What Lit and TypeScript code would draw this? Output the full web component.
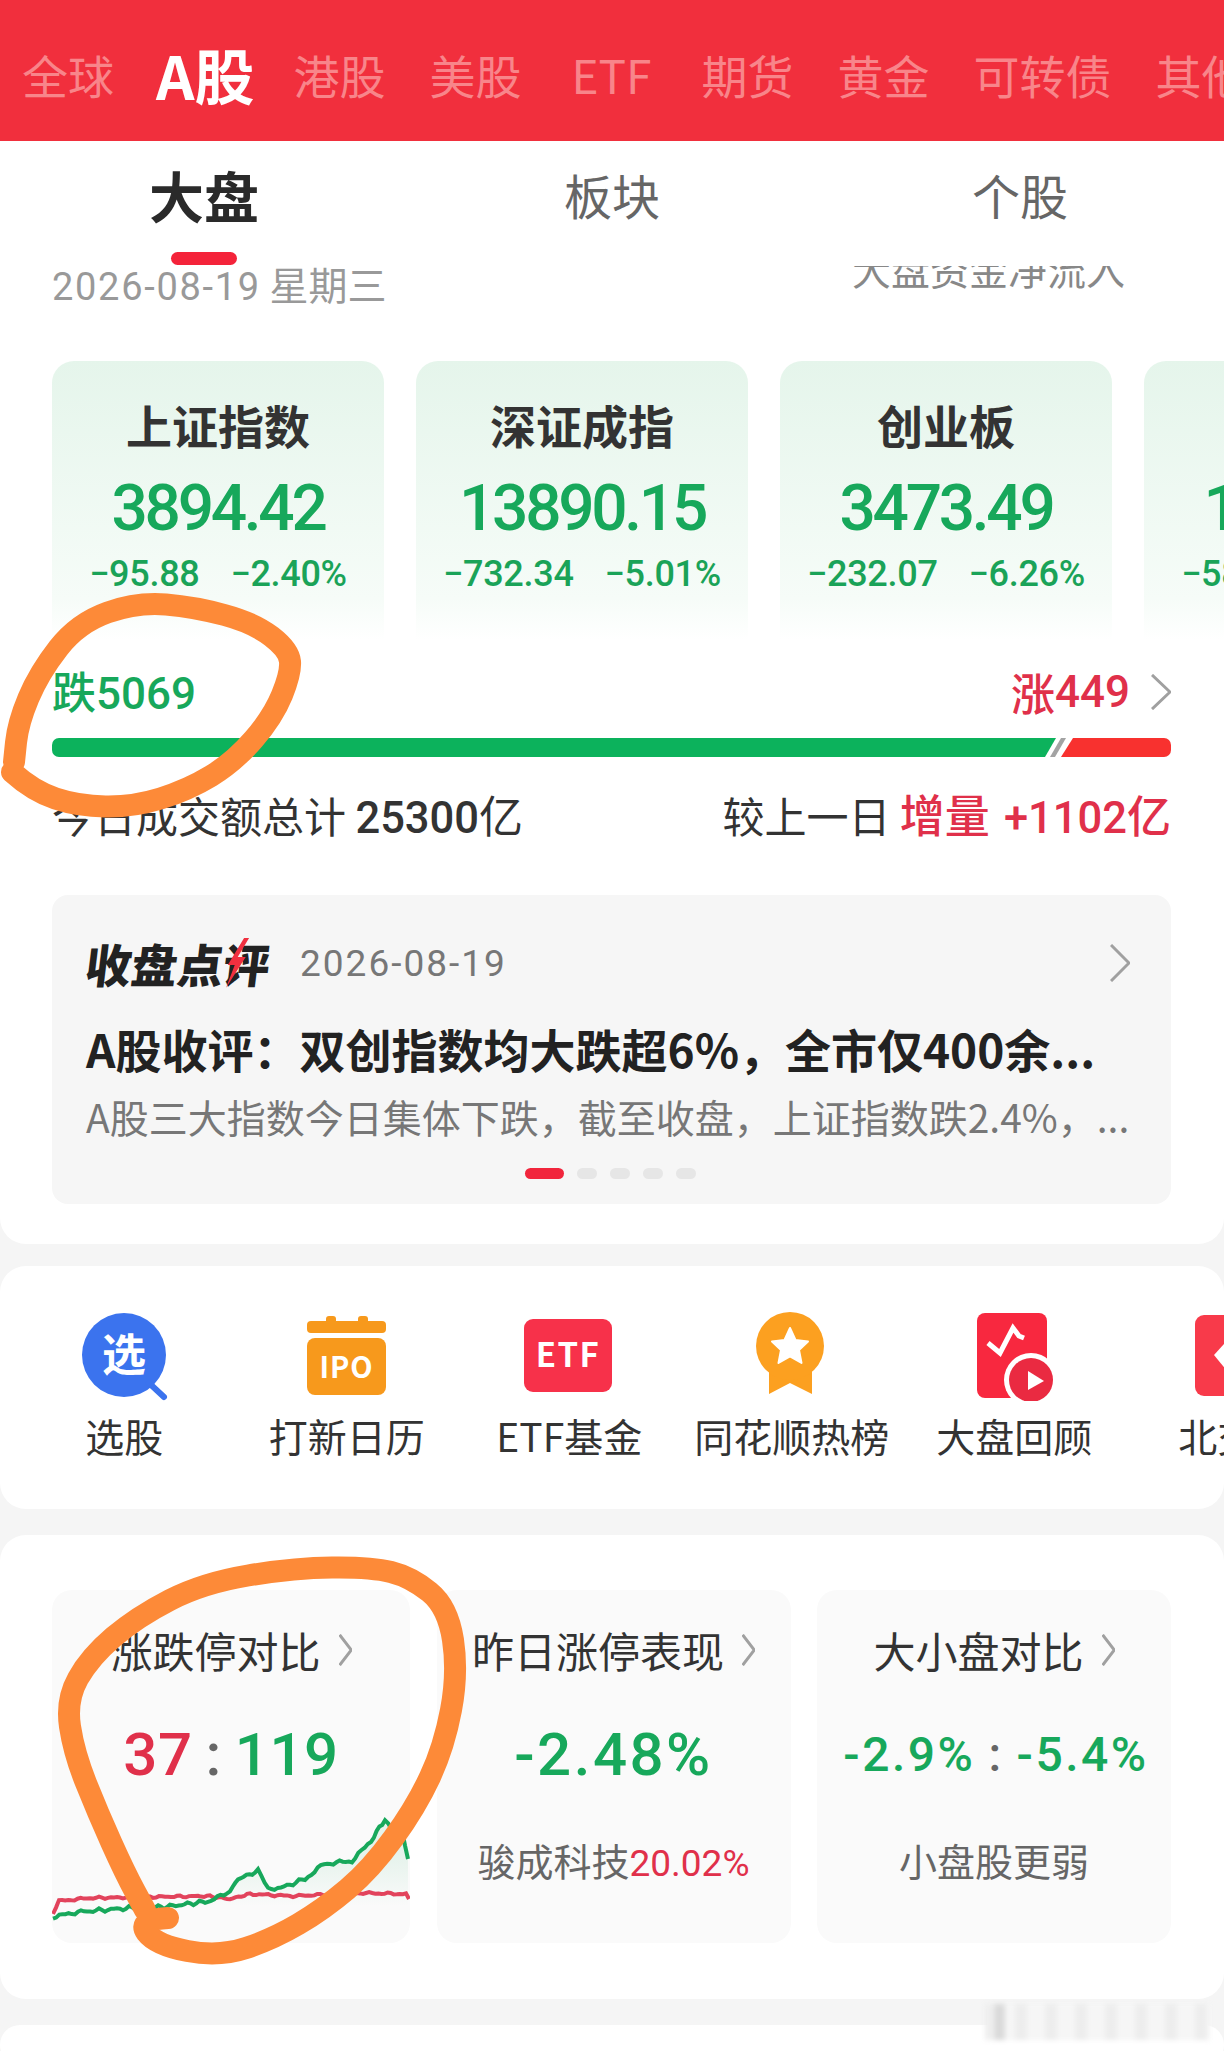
import { css, html, LitElement, svg } from "lit";
import { customElement } from "lit/decorators.js";

type Pt = [number, number];

const MARKETS = ["全球", "A股", "港股", "美股", "ETF", "期货", "黄金", "可转债", "其他"];

const INDEXES = [
  { name: "上证指数", value: "3894.42", diff: "−95.88", pct: "−2.40%" },
  { name: "深证成指", value: "13890.15", diff: "−732.34", pct: "−5.01%" },
  { name: "创业板", value: "3473.49", diff: "−232.07", pct: "−6.26%" },
  { name: "科创50", value: "1283.05", diff: "−58.70", pct: "−4.38%" },
];

const GREEN_LINE: Pt[] = [
  [1, 327], [26, 322], [77, 318], [112, 317], [159, 311], [178, 301], [186, 289], [206, 281],
  [216, 298], [229, 298], [253, 289], [272, 274], [300, 271], [319, 251], [333, 229], [346, 251],
  [350, 241], [356, 269],
];
const RED_LINE: Pt[] = [
  [1, 323], [7, 311], [38, 308], [155, 306], [178, 309], [198, 304], [241, 306], [311, 303],
  [354, 304], [357, 309],
];

const CIRCLE_ONE: Pt[] = [
  [12, 772], [33, 791], [78, 806], [133, 807], [188, 790], [234, 762], [273, 717], [291, 673],
  [289, 650], [254, 623], [195, 607], [137, 602], [78, 623], [39, 673], [18, 723], [14, 762],
];
const CIRCLE_TWO: Pt[] = [
  [168, 1918], [137, 1920], [156, 1945], [219, 1957], [273, 1939], [324, 1909], [371, 1869],
  [416, 1807], [444, 1747], [458, 1673], [448, 1607], [411, 1577], [371, 1567], [293, 1568],
  [203, 1583], [137, 1617], [90, 1657], [66, 1700], [74, 1753], [98, 1813], [125, 1873], [145, 1910],
];

// rounds a list of hand traced points into a path through the midpoints
function smooth(pts: Pt[]) {
  let d = `M${pts[0][0]} ${pts[0][1]}`;
  for (let i = 1; i < pts.length - 1; i++) {
    const mx = (pts[i][0] + pts[i + 1][0]) / 2;
    const my = (pts[i][1] + pts[i + 1][1]) / 2;
    d += ` Q${pts[i][0]} ${pts[i][1]} ${mx} ${my}`;
  }
  const last = pts[pts.length - 1];
  return `${d} L${last[0]} ${last[1]}`;
}

// the intraday lines are noisy, so walk the outline and add a little jitter
function jagged(pts: Pt[], amp: number) {
  const out: string[] = [];
  for (let i = 0; i < pts.length - 1; i++) {
    const [x0, y0] = pts[i];
    const [x1, y1] = pts[i + 1];
    const steps = Math.max(1, Math.round((x1 - x0) / 3));
    for (let s = 0; s < steps; s++) {
      const x = x0 + ((x1 - x0) * s) / steps;
      const y = y0 + ((y1 - y0) * s) / steps;
      const noise = Math.sin(x * 1.7) * amp + Math.sin(x * 0.63) * amp * 0.7;
      out.push(`${x.toFixed(1)},${(y + noise).toFixed(1)}`);
    }
  }
  const end = pts[pts.length - 1];
  out.push(`${end[0]},${end[1]}`);
  return out.join(" ");
}

const chevron = (w: number, h: number) => html`
  <svg class="chevron" width=${w} height=${h} viewBox="0 0 20 38" preserveAspectRatio="none">
    <polyline
      points="1,1 19,19 1,37"
      fill="none"
      stroke="#a0a0a0"
      stroke-width="3"
      vector-effect="non-scaling-stroke"
    />
  </svg>
`;

const ICONS = [
  {
    label: "选股",
    art: svg`
      <circle cx="45" cy="44" r="42" fill="#3b73ee" />
      <line x1="70" y1="72" x2="85" y2="86" stroke="#3b73ee" stroke-width="6" stroke-linecap="round" />
      <text x="45" y="60" text-anchor="middle" font-size="44" font-weight="700" fill="#fff">选</text>
    `,
  },
  {
    label: "打新日历",
    art: svg`
      <rect x="24" y="5" width="10" height="10" rx="3" fill="#f7991c" />
      <rect x="56" y="5" width="10" height="10" rx="3" fill="#f7991c" />
      <rect x="5" y="10" width="79" height="12" rx="4" fill="#f7991c" />
      <rect x="5" y="27" width="79" height="57" rx="8" fill="#f7991c" />
      <text x="44.5" y="67" text-anchor="middle" font-size="29" font-weight="700" letter-spacing="1" fill="#fff" font-family="Liberation Sans">IPO</text>
    `,
  },
  {
    label: "ETF基金",
    art: svg`
      <rect x="0" y="8" width="88" height="73" rx="9" fill="#f7314a" />
      <text x="44" y="56" text-anchor="middle" font-size="33" font-weight="700" letter-spacing="1.5" fill="#fff" font-family="Liberation Sans">ETF</text>
    `,
  },
  {
    label: "同花顺热榜",
    art: svg`
      <polygon points="22,50 65,50 65,83 43,72 22,83" fill="#fca020" />
      <circle cx="43" cy="35" r="34" fill="#fca020" />
      <polygon points="43,17 48.5,29 61,30.5 52,39 54.5,52 43,45.5 31.5,52 34,39 25,30.5 37.5,29" fill="#fff" stroke="#fff" stroke-width="2" stroke-linejoin="round" />
    `,
  },
  {
    label: "大盘回顾",
    art: svg`
      <rect x="8" y="2" width="70" height="85" rx="8" fill="#f8283f" />
      <polyline points="19,32 31,42 44,17 50,25 55,27" fill="none" stroke="#fff" stroke-width="5" />
      <circle cx="62" cy="69" r="27" fill="#fff" />
      <circle cx="62" cy="69" r="22" fill="#ea2a41" />
      <polygon points="59,60 59,79 75,70" fill="#fff" />
    `,
  },
  {
    label: "北交所",
    art: svg`
      <rect x="3" y="4" width="82" height="81" rx="9" fill="#f83a4a" />
      <polygon points="33,32 57,32 68,44 45,72 22,44" fill="#fff" />
    `,
  },
];

@customElement("app-root")
export class AppRoot extends LitElement {
  private renderIndexCard(item: (typeof INDEXES)[number]) {
    return html`
      <div class="index-card">
        <div class="index-name">${item.name}</div>
        <div class="index-value num">${item.value}</div>
        <div class="index-diff num"><span>${item.diff}</span><span>${item.pct}</span></div>
      </div>
    `;
  }

  private renderChart() {
    const green = jagged(GREEN_LINE, 1.2);
    const red = jagged(RED_LINE, 0.7);
    return html`
      <svg class="chart" viewBox="0 0 358 353" width="358" height="353">
        <defs>
          <linearGradient id="chart-fade" x1="0" y1="0" x2="0" y2="1">
            <stop offset="0.3" stop-color="#17a85b" stop-opacity="0.09" />
            <stop offset="0.75" stop-color="#17a85b" stop-opacity="0" />
          </linearGradient>
        </defs>
        <polygon points="${green} 356,345 1,345" fill="url(#chart-fade)" />
        <polyline points=${red} fill="none" stroke="#e2435c" stroke-width="4" />
        <polyline points=${green} fill="none" stroke="#17a85b" stroke-width="4" />
      </svg>
    `;
  }

  render() {
    return html`
      <header class="markets">
        ${MARKETS.map(
          (m) =>
            html`<span class="market ${m === "A股" ? "active" : ""} ${m === "ETF" ? "latin" : ""}"
              >${m}</span
            >`
        )}
      </header>

      <section class="panel first">
        <nav class="subtabs">
          <div class="subtab active"><span>大盘</span><i></i></div>
          <div class="subtab"><span>板块</span></div>
          <div class="subtab"><span>个股</span></div>
        </nav>

        <div class="date-row">
          <span class="date"><span class="num">2026-08-19</span> 星期三</span>
          <span class="flow">大盘资金净流入</span>
        </div>

        <div class="index-row">${INDEXES.map((i) => this.renderIndexCard(i))}</div>

        <div class="breadth">
          <span class="down">跌<span class="num">5069</span></span>
          <span class="up">涨<span class="num">449</span>${chevron(20, 36)}</span>
        </div>
        <svg class="bar" viewBox="0 0 1119 19" width="1119" height="19">
          <polygon points="0,0 1004,0 993,19 0,19" fill="#0cb25c" />
          <polygon points="1009,0 1014,0 1003,19 998,19" fill="#a3a3a3" />
          <polygon points="1021,0 1119,0 1119,19 1009,19" fill="#f8312f" />
        </svg>

        <div class="volume">
          <span>今日成交额总计 <span class="amount"><span class="num">25300</span>亿</span></span>
          <span>较上一日 <em>增量 <span class="amount gain"><span class="num">+1102</span>亿</span></em></span>
        </div>

        <article class="review">
          <div class="review-head">
            <span class="review-title">收盘点评
              <svg class="bolt" viewBox="0 0 22 50" width="22" height="50">
                <polygon points="16,0 3,27 10,27 4,50 20,19 12,19 21,0" fill="#f0303f" />
              </svg>
            </span>
            <span class="review-date num">2026-08-19</span>
            ${chevron(20, 38)}
          </div>
          <div class="review-headline">A股收评：双创指数均大跌超6%，全市仅400余...</div>
          <div class="review-sub">A股三大指数今日集体下跌，截至收盘，上证指数跌2.4%，...</div>
          <div class="dots"><i class="on"></i><i></i><i></i><i></i><i></i></div>
        </article>
      </section>

      <section class="panel shortcuts">
        ${ICONS.map(
          (icon) => html`
            <div class="shortcut">
              <svg viewBox="0 0 90 90" width="90" height="90">${icon.art}</svg>
              <span>${icon.label}</span>
            </div>
          `
        )}
      </section>

      <section class="panel stats">
        <div class="stat">
          ${this.renderChart()}
          <div class="stat-title">涨跌停对比${chevron(13, 32)}</div>
          <div class="stat-value tight num"><b class="red">37</b><b class="colon">:</b><b>119</b></div>
        </div>
        <div class="stat">
          <div class="stat-title">昨日涨停表现${chevron(13, 32)}</div>
          <div class="stat-value num"><b>-2.48%</b></div>
          <div class="stat-note">骏成科技<span class="num red">20.02%</span></div>
        </div>
        <div class="stat">
          <div class="stat-title">大小盘对比${chevron(13, 32)}</div>
          <div class="stat-value small num"><b>-2.9%</b><b class="colon">:</b><b>-5.4%</b></div>
          <div class="stat-note">小盘股更弱</div>
        </div>
      </section>

      <section class="panel last"></section>
      <div class="watermark"></div>

      <svg class="scribble" viewBox="0 0 1224 2051" width="1224" height="2051">
        <path d=${smooth(CIRCLE_ONE)} />
        <path d=${smooth(CIRCLE_TWO)} />
      </svg>
    `;
  }

  static styles = css`
    :host {
      display: block;
      position: relative;
      width: 1224px;
      height: 2051px;
      overflow: hidden;
      background: #f5f5f5;
      color: #333;
      font-family: "Noto Sans CJK SC", sans-serif;
    }

    .num {
      font-family: Roboto, "Noto Sans CJK SC", sans-serif;
    }

    .red {
      color: #e0304a;
    }

    .markets {
      display: flex;
      align-items: center;
      gap: 44px;
      height: 141px;
      padding: 6px 0 0 22px;
      box-sizing: border-box;
      background: #f12f3d;
      white-space: nowrap;
      overflow: hidden;
    }

    .market {
      flex-shrink: 0;
      font-size: 46px;
      line-height: 60px;
      color: #f8858a;
    }

    .market.active {
      margin: 0 -5px 0 -2px;
      font-size: 60px;
      font-weight: 700;
      color: #fff;
    }

    .market.latin {
      margin: 0 6px 0 6px;
    }

    .panel {
      background: #fff;
      border-radius: 26px;
    }

    .first {
      border-radius: 0 0 26px 26px;
      padding-bottom: 40px;
    }

    .subtabs {
      display: grid;
      grid-template-columns: repeat(3, 408px);
      height: 125px;
      overflow: hidden;
    }

    .subtab {
      display: flex;
      flex-direction: column;
      align-items: center;
      padding-top: 18px;
      font-size: 48px;
      line-height: 70px;
      color: #666;
    }

    .subtab.active {
      font-size: 55px;
      font-weight: 700;
      color: #2a2a2a;
    }

    .subtab i {
      width: 66px;
      height: 13px;
      margin-top: 23px;
      border-radius: 7px;
      background: #f4233a;
    }

    .date-row {
      display: flex;
      justify-content: space-between;
      align-items: flex-start;
      height: 95px;
      padding: 0 99px 0 52px;
      overflow: hidden;
      font-size: 39px;
      line-height: 34px;
      color: #999;
    }

    .date .num {
      font-size: 38px;
      letter-spacing: 1.7px;
    }

    .flow {
      margin-top: -15px;
      color: #888;
    }

    .index-row {
      display: flex;
      gap: 32px;
      padding-left: 52px;
      height: 279px;
      overflow: hidden;
    }

    .index-card {
      display: flex;
      flex-direction: column;
      align-items: center;
      flex-shrink: 0;
      width: 332px;
      padding-top: 33px;
      box-sizing: border-box;
      border-radius: 22px 22px 0 0;
      background: linear-gradient(#e5f5eb, #f6fcf8 85%, #ffffff);
      white-space: nowrap;
    }

    .index-name {
      font-size: 46px;
      line-height: 60px;
      font-weight: 700;
    }

    .index-value {
      margin-top: 20px;
      font-size: 64px;
      line-height: 70px;
      font-weight: 500;
      letter-spacing: -3.3px;
      color: #17a85b;
    }

    .index-diff {
      display: flex;
      gap: 31px;
      margin-top: 10px;
      font-size: 36px;
      line-height: 40px;
      font-weight: 500;
      letter-spacing: -0.3px;
      color: #1aa358;
    }

    .breadth {
      display: flex;
      justify-content: space-between;
      align-items: center;
      margin: 25px 53px 0 52px;
      font-size: 44px;
      line-height: 50px;
      font-weight: 500;
    }

    .down {
      color: #17a85b;
    }

    .up {
      display: flex;
      align-items: center;
      color: #e0304a;
    }

    .up .chevron {
      margin-left: 21px;
    }

    .bar {
      display: block;
      margin: 19px 0 0 52px;
      border-radius: 7px;
    }

    .volume {
      display: flex;
      justify-content: space-between;
      margin: 32px 53px 0 52px;
      font-size: 42px;
      line-height: 50px;
    }

    .amount {
      font-size: 44px;
    }

    .amount.gain {
      margin-left: 4px;
    }

    .volume .num {
      font-size: 43.5px;
      font-weight: 500;
    }

    .volume em {
      font-style: normal;
      font-size: 45px;
      font-weight: 500;
      color: #e0304a;
    }

    .review {
      margin: 51px 53px 0 52px;
      height: 309px;
      padding: 38px 41px 0 34px;
      box-sizing: border-box;
      border-radius: 16px;
      background: #f6f6f6;
    }

    .review-head {
      display: flex;
      align-items: center;
      height: 60px;
    }

    .review-title {
      position: relative;
      display: inline-block;
      font-size: 46px;
      line-height: 60px;
      font-weight: 900;
      color: #222;
      white-space: nowrap;
      transform: skewX(-7deg);
    }

    .bolt {
      position: absolute;
      left: 139px;
      top: 5px;
    }

    .review-date {
      margin-left: 30px;
      font-size: 37px;
      letter-spacing: 2px;
      color: #777;
    }

    .review-head .chevron {
      margin-left: auto;
    }

    .review-headline {
      margin-top: 27px;
      font-size: 46px;
      line-height: 56px;
      font-weight: 700;
      color: #222;
      white-space: nowrap;
    }

    .review-sub {
      margin-top: 15px;
      font-size: 39px;
      line-height: 50px;
      color: #777;
      white-space: nowrap;
    }

    .dots {
      display: flex;
      justify-content: center;
      gap: 13px;
      margin-top: 27px;
      padding-left: 4px;
    }

    .dots i {
      width: 20px;
      height: 11px;
      border-radius: 6px;
      background: #e6e6e6;
    }

    .dots i.on {
      width: 39px;
      background: #f1253c;
    }

    .shortcuts {
      display: flex;
      margin-top: 22px;
      height: 243px;
      padding: 45px 0 0 13px;
      box-sizing: border-box;
      overflow: hidden;
    }

    .shortcuts svg text {
      font-family: "Noto Sans CJK SC", sans-serif;
    }

    .shortcut {
      display: flex;
      flex-direction: column;
      align-items: center;
      flex-shrink: 0;
      width: 222.5px;
      font-size: 39px;
      line-height: 50px;
      white-space: nowrap;
    }

    .shortcut span {
      margin-top: 9px;
    }

    .stats {
      display: grid;
      grid-template-columns: 358px 354px 354px;
      gap: 26.5px;
      margin-top: 26px;
      padding: 55px 53px 56px 52px;
    }

    .stat {
      position: relative;
      display: flex;
      flex-direction: column;
      align-items: center;
      height: 353px;
      padding-top: 33px;
      box-sizing: border-box;
      border-radius: 20px;
      background: #fafafa;
      overflow: hidden;
    }

    .chart {
      position: absolute;
      left: 0;
      top: 0;
    }

    .stat-title {
      position: relative;
      display: flex;
      align-items: center;
      gap: 18px;
      font-size: 42px;
      line-height: 54px;
      white-space: nowrap;
    }

    .stat-value {
      position: relative;
      display: flex;
      align-items: center;
      margin-top: 43px;
      font-size: 60px;
      line-height: 70px;
      letter-spacing: 2.5px;
      color: #17a85b;
      white-space: nowrap;
    }

    .stat-value.tight {
      letter-spacing: 0.5px;
    }

    .stat-value.small {
      padding-left: 4px;
      font-size: 48px;
    }

    .stat-value b {
      font-weight: 500;
    }

    .stat-value .colon {
      margin: 0 13px;
      color: #666;
    }

    .stat-value .red {
      color: #e0304a;
    }

    .stat-note {
      margin-top: 45px;
      font-size: 38px;
      line-height: 50px;
      color: #666;
      white-space: nowrap;
    }

    .stat-note .num {
      font-size: 37px;
    }

    .last {
      margin-top: 26px;
      height: 40px;
    }

    .watermark {
      position: absolute;
      left: 985px;
      top: 2004px;
      width: 225px;
      height: 36px;
      filter: blur(2.5px);
      background: linear-gradient(90deg, #fbfbfb 0 10px, #dedede 10px 20px, #fafafa 20px),
        repeating-linear-gradient(90deg, #f2f2f2 0 12px, #fbfbfb 12px 30px);
      background-blend-mode: multiply;
    }

    .scribble {
      position: absolute;
      left: 0;
      top: 0;
      pointer-events: none;
    }

    .scribble path {
      fill: none;
      stroke: #fd8a38;
      stroke-width: 22;
      stroke-linecap: round;
      stroke-linejoin: round;
    }
  `;
}

declare global {
  interface HTMLElementTagNameMap {
    "app-root": AppRoot;
  }
}
